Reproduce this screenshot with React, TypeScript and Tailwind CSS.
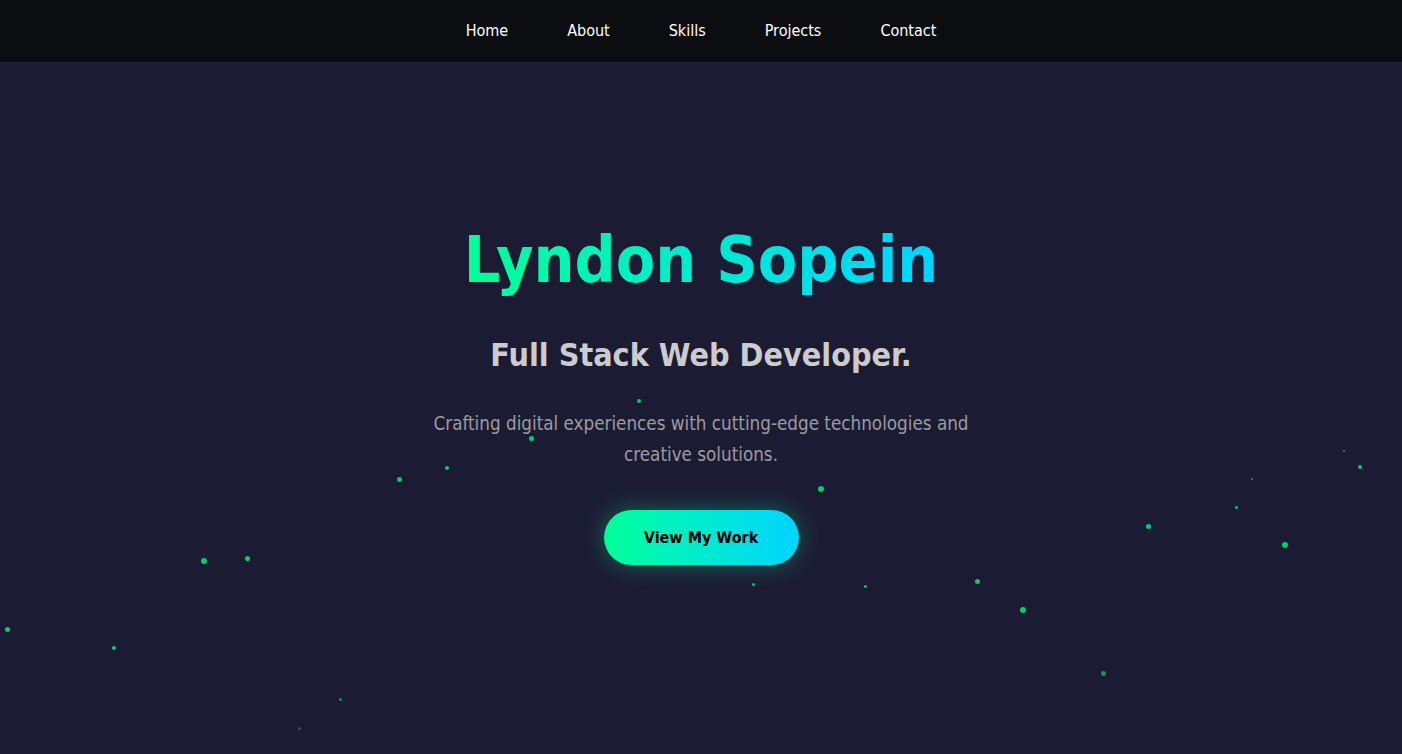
import React from "react";

const particles: [number, number, number, number][] = [
  [639, 401, 2, 1], [531, 438, 2.5, 1], [447, 468, 2, 1], [399, 479, 2.5, 1],
  [204, 561, 3, 1], [247, 558, 2.5, 1], [7, 629, 2.5, 1], [114, 648, 2, 1],
  [340, 699, 1.5, 0.7], [299, 728, 1.5, 0.45], [821, 489, 3, 1], [753, 584, 1.5, 1],
  [865, 586, 1.5, 1], [977, 581, 2.5, 1], [1023, 610, 3, 1], [1103, 673, 2.5, 0.7],
  [1148, 526, 2.5, 1], [1236, 507, 1.5, 1], [1252, 479, 1, 0.8], [1285, 545, 3, 1],
  [1344, 451, 1, 0.8], [1360, 467, 2, 1],
];

export default function App() {
  return (
    <div
      className="w-full h-[754px] overflow-hidden bg-[#1c1b34] relative"
      style={{ fontFamily: '"DejaVu Sans Condensed", "DejaVu Sans", sans-serif' }}
    >
      <nav className="h-[63px] bg-[#0c0d10] flex items-center justify-center gap-[59px] border-b border-[#221f3a] relative z-10">
        {["Home", "About", "Skills", "Projects", "Contact"].map((l) => (
          <a key={l} className="text-white text-[16px] cursor-pointer">{l}</a>
        ))}
      </nav>
      {particles.map(([x, y, r, o], i) => (
        <div
          key={i}
          className="absolute rounded-full bg-[#00cf6c]"
          style={{ left: x - r, top: y - r, width: r * 2, height: r * 2, opacity: o }}
        />
      ))}
      <section className="relative flex flex-col items-center pt-[159px] text-center">
        <h1 className="text-[64px] font-bold leading-[1.2] bg-gradient-to-r from-[#00ff95] to-[#00d4ff] bg-clip-text text-transparent">
          Lyndon Sopein
        </h1>
        <h2 className="mt-[37px] text-[32px] font-bold text-[#cccccc] leading-[1.2]">
          Full Stack Web Developer.
        </h2>
        <p className="mt-[34px] w-[560px] text-[18.7px] leading-[31px] text-[#9b9b9f]">
          Crafting digital experiences with cutting-edge technologies and creative solutions.
        </p>
        <button className="mt-[40px] w-[195px] h-[55px] rounded-full bg-gradient-to-r from-[#00ff95] to-[#00d4ff] text-black font-bold text-[16px] shadow-[0_0_25px_rgba(0,255,149,0.35)]">
          View My Work
        </button>
      </section>
    </div>
  );
}
